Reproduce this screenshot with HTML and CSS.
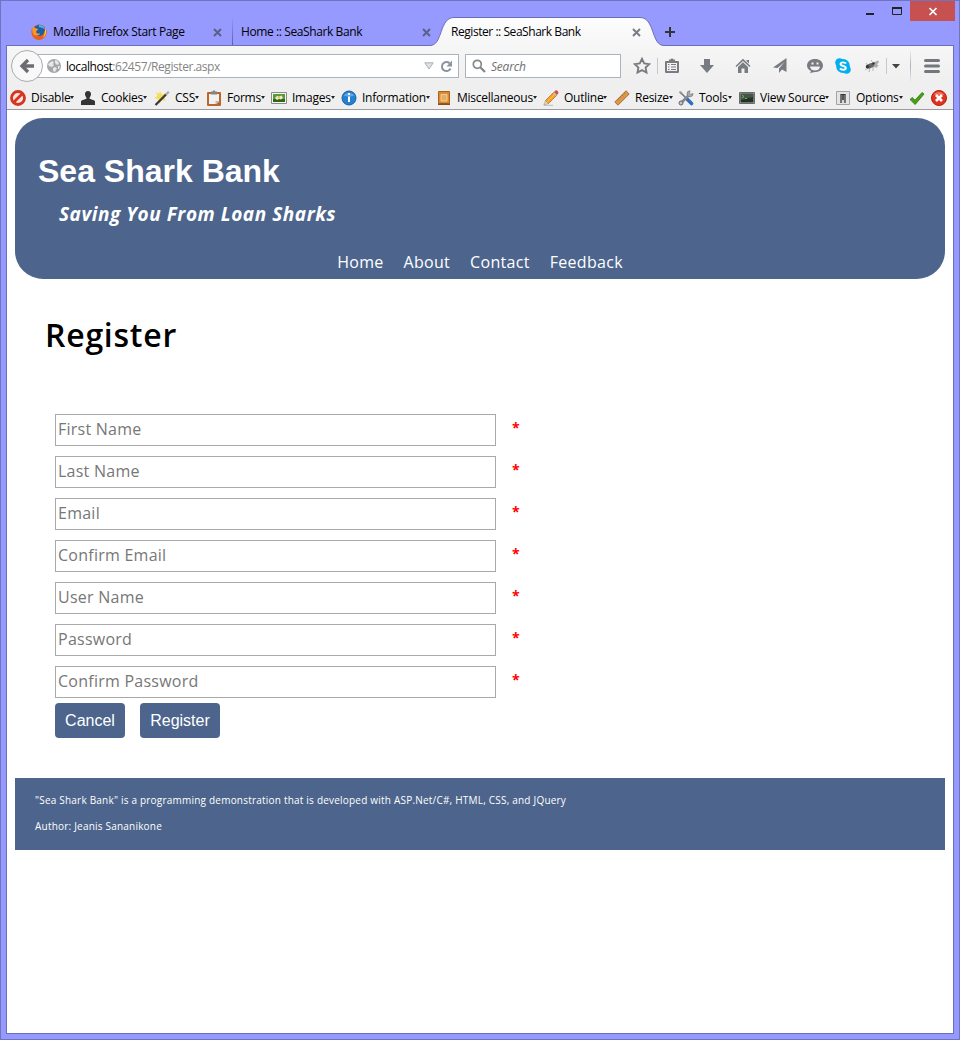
FILE: index.html
```html
<!DOCTYPE html>
<html lang="en">
<head>
<meta charset="utf-8">
<title>Register :: SeaShark Bank</title>
<link rel="stylesheet" href="styles.css">
</head>
<body>
<div class="window">
  <div class="titlebar">
    <svg class="win-btn" width="27" height="20" viewBox="0 0 27 20"><path d="M10 12h8v2h-8z" fill="#222"/></svg>
    <svg class="win-btn" width="27" height="20" viewBox="0 0 27 20"><path d="M9.500 7v6.500h9V7" fill="none" stroke="#222"/><path d="M9 6h10v2H9z" fill="#222"/></svg>
    <svg class="win-close" width="45" height="20" viewBox="0 0 45 20"><path d="M19.500 7l7 7M26.500 7l-7 7" stroke="#fff" stroke-width="1.700"/></svg>
  </div>
  <div class="tabs">
    <div class="tab tab-first">
      <svg width="16" height="16" viewBox="0 0 16 16"><circle cx="8" cy="8" r="7.500" fill="#e8641b"/><circle cx="8.500" cy="6.500" r="5.800" fill="#1c5fa8"/><path d="M8 1a6 6 0 0 1 6 5c-2-3-5-2-6-3z" fill="#4fb4e8"/><path d="M1 4c0 7 3 8 7 8 3 0 5-2 5-4l2-3c2 6-2 11-7 11S-1 11 1 4z" fill="#e8601a"/><path d="M2 3c1 1 3 1 5 2 0 1-2 2-2 3 1 2 3 2 4 1 0 3-4 3-6 2C1 9 1 5 2 3z" fill="#f49a2d"/><path d="M14 4c2 3 1 8-2 10 2-4 2-6 2-10z" fill="#fdd53a"/></svg>
      <span class="tab-label">Mozilla Firefox Start Page</span>
      <svg class="x" width="9" height="9" viewBox="0 0 9 9"><path d="M1 1l7 7M8 1l-7 7"/></svg>
    </div>
    <div class="tab-sep"></div>
    <div class="tab tab-second">
      <span class="tab-label">Home :: SeaShark Bank</span>
      <svg class="x" width="9" height="9" viewBox="0 0 9 9"><path d="M1 1l7 7M8 1l-7 7"/></svg>
    </div>
    <div class="tab tab-active">
      <svg class="tab-shape" width="234" height="29" viewBox="0 0 234 29">
        <defs><linearGradient id="tg" x1="0" y1="0" x2="0" y2="1"><stop offset="0" stop-color="#fdfdfe"/><stop offset="1" stop-color="#f6f6f7"/></linearGradient></defs>
        <path d="M0 28.500C13 28.500 9 .5 24 .5H210C225 .5 221 28.500 234 28.500V29H0z" fill="url(#tg)"/>
        <path d="M0 28.500C13 28.500 9 .5 24 .5H210C225 .5 221 28.500 234 28.500" fill="none" stroke="#6b6eb8"/>
      </svg>
      <span class="tab-label">Register :: SeaShark Bank</span>
      <svg class="x" width="9" height="9" viewBox="0 0 9 9"><path d="M1 1l7 7M8 1l-7 7"/></svg>
    </div>
    <svg class="plus" width="12" height="12" viewBox="0 0 12 12"><path d="M6 1v10M1 6h10" stroke="#333" stroke-width="2"/></svg>
  </div>

  <div class="content">
    <div class="chrome">
      <div class="navbar">
        <svg class="back" width="34" height="34" viewBox="0 0 34 34"><circle cx="17" cy="17" r="15.500" fill="#f8f8f9" stroke="#a9abae"/><path d="M18 11l-6 6 6 6M12.500 17H24" fill="none" stroke="#6b6d71" stroke-width="3.300"/></svg>
        <div class="url">
          <svg width="14" height="14" viewBox="0 0 14 14"><circle cx="7" cy="7" r="7" fill="#a5a6a8"/><path d="M1 5l4-3 2 1-1 2 1 1-2 2-3-1zM8 1l3 1 1 3-2 1-2-2zM6 9l2-1 2 1-2 4-2-1zM11 7l2 0-1 3-1 0z" fill="#e6e7e9"/></svg>
          <span class="url-text"><b>localhost</b>:62457/Register.aspx</span>
          <svg class="url-drop" width="10" height="8" viewBox="0 0 10 8"><path d="M.8 .8h8.400L5 7z" fill="#dfe2e6" stroke="#a9afb6"/></svg>
          <svg width="13" height="13" viewBox="0 0 13 13"><path d="M9.500 3.300A4.500 4.500 0 1 0 10.500 8.500" fill="none" stroke="#8895a1" stroke-width="2"/><path d="M12 .5v6H6.500z" fill="#8895a1"/></svg>
        </div>
        <div class="search">
          <svg width="14" height="14" viewBox="0 0 14 14"><circle cx="5.300" cy="5.300" r="4" fill="none" stroke="#85878a" stroke-width="1.700"/><path d="M8.500 8.500l4.500 4.500" stroke="#85878a" stroke-width="2.300"/></svg>
          <span>Search</span>
        </div>
        <div class="tools">
          <svg width="18" height="18" viewBox="0 0 18 18"><path d="M9 1.800l2.200 4.600 5 .7-3.600 3.500.9 5L9 13.200l-4.500 2.400.9-5L1.800 7.100l5-.7z" fill="none" stroke="#787b80" stroke-width="1.900"/></svg>
          <i class="vsep"></i>
          <svg width="16" height="16" viewBox="0 0 16 16"><path d="M2 4h12v10H2z" fill="none" stroke="#787b80" stroke-width="2" stroke-linejoin="round"/><path d="M5 4V1.500h1.500L7.500.5h1l1 1H11V4z" fill="#787b80"/><path d="M4 6.500h1.500M7 6.500h5M4 9h1.500M7 9h5M4 11.500h1.500M7 11.500h5" stroke="#787b80"/></svg>
          <svg width="16" height="16" viewBox="0 0 16 16"><path d="M5 1h6v6h4l-7 8-7-8h4z" fill="#787b80"/></svg>
          <svg width="16" height="16" viewBox="0 0 16 16"><path d="M8 .8L15.500 8l-1 1L8 3 1.500 9l-1-1zM11.500 2H14v3.500L11.500 3z" fill="#787b80"/><path d="M3 9l5-4.700L13 9v6H9.500v-4.500h-3V15H3z" fill="#787b80"/></svg>
          <svg width="16" height="16" viewBox="0 0 16 16"><path d="M14.500 0v14L10 11.500 7 15v-4.500L12.500 4 5.500 10 1 9.500z" fill="#787b80"/></svg>
          <svg width="16" height="16" viewBox="0 0 16 16"><path d="M8 1c4.500 0 8 2.700 8 6.500S12.500 14 8 14l-5 1 1-2C1.500 12 0 10 0 7.500 0 3.700 3.500 1 8 1z" fill="#787b80"/><path d="M4.500 4.500h2v2h-2zM9.500 4.500h2v2h-2zM3 8.500h10c-.5 3-2.500 4-5 4s-4.500-1-5-4z" fill="#f2f2f3"/></svg>
          <svg width="16" height="16" viewBox="0 0 16 16"><circle cx="8" cy="8" r="6.900" fill="#00aff0"/><circle cx="4.500" cy="4.500" r="4.300" fill="#00aff0"/><circle cx="11.500" cy="11.500" r="4.300" fill="#00aff0"/><path d="M11 5.600C10 4 5.600 3.700 5.500 6c0 2.500 5.300 1.500 5.300 4 0 2.300-4.600 2.200-5.800.4" fill="none" stroke="#fff" stroke-width="1.900"/></svg>
          <svg width="16" height="16" viewBox="0 0 16 16"><path d="M2 5l2 3M1 12l3-2M5 14l1-4M9 13V9M13 10l-3-2M7 2l2 3" stroke="#a5a6a8" stroke-width=".8"/><path d="M6 6l8-3.500 1 1.500-2 2.500 2 1.500-3 1-5 .5z" fill="#a9abad"/><ellipse cx="6" cy="7.800" rx="4" ry="2.300" fill="#666" transform="rotate(-20 6 7.800)"/><circle cx="3.500" cy="8.800" r="1.800" fill="#3a3a3a"/><circle cx="9.500" cy="5.500" r="1.200" fill="#333"/></svg>
          <i class="vsep"></i>
          <svg width="8" height="5" viewBox="0 0 8 5"><path d="M0 0h8L4 4.500z" fill="#444"/></svg>
          <i class="vsep tall"></i>
          <svg width="16" height="14" viewBox="0 0 16 14"><path d="M1.500 1.500h13M1.500 7h13M1.500 12.500h13" stroke="#74777c" stroke-width="3" stroke-linecap="round"/></svg>
        </div>
      </div>

      <div class="devbar">
        <div class="dev"><svg width="16" height="16" viewBox="0 0 16 16"><circle cx="8" cy="8" r="6.500" fill="#f3e3df" stroke="#d9321f" stroke-width="2.800"/><path d="M3.500 12.500l9-9" stroke="#d9321f" stroke-width="2.800"/></svg><span>Disable</span><em></em></div>
        <div class="dev"><svg width="16" height="16" viewBox="0 0 16 16"><path d="M8 1c2 0 3.200 1.300 3 3.500C10.800 6.500 9.500 7 9.500 8.500c0 1 5 1 5.500 3V15H1v-3.500c.5-2 5.500-2 5.500-3C6.500 7 5.200 6.500 5 4.500 4.800 2.300 6 1 8 1z" fill="#333436"/></svg><span>Cookies</span><em></em></div>
        <div class="dev"><svg width="16" height="16" viewBox="0 0 16 16"><path d="M6 1l1.500 3.500L12 3l-2 4 2 4-4-1-3 4-.5-5L0 8l3.500-2L2 2l3 2z" fill="#f9dc55"/><path d="M1.500 15L12 4.500" stroke="#3a3a3a" stroke-width="2.300"/><path d="M12 4.500L14.800 1.700" stroke="#aaa" stroke-width="2.300"/></svg><span>CSS</span><em></em></div>
        <div class="dev"><svg width="16" height="16" viewBox="0 0 16 16"><rect x="1" y="2" width="14" height="14" rx="1" fill="#b9672d"/><path d="M3 4h10v7.500L10 14H3z" fill="#f1f1f1"/><path d="M9.500 14v-3H13z" fill="#b7b7b7"/><path d="M5 1.500h1.500L8 0l1.500 1.500H11v3H5z" fill="#858585"/></svg><span>Forms</span><em></em></div>
        <div class="dev"><svg width="16" height="16" viewBox="0 0 16 16"><path d="M.5 2.500h15v11H.5z" fill="#f6f6f6" stroke="#8b8b8b"/><path d="M2 4h12v8H2z" fill="#5c9a35"/><path d="M2 9h12v3H2z" fill="#2f6717"/><path d="M4 8l2-2 2 .5L10.500 5.500 12 8l-2 1.500-2-.5-2 1z" fill="#e9eed8"/><circle cx="8" cy="7.500" r="1.200" fill="#e6c34a"/></svg><span>Images</span><em></em></div>
        <div class="dev"><svg width="16" height="16" viewBox="0 0 16 16"><circle cx="8" cy="8" r="7" fill="#2580d0" stroke="#1762a8"/><path d="M3 5.500C4 2 12 2 13 5.500 11 7 5 7 3 5.500z" fill="#5ea9e5"/><path d="M7 3h2v2H7zM7 6.500h2V12H7z" fill="#fff"/></svg><span>Information</span><em></em></div>
        <div class="dev"><svg width="16" height="16" viewBox="0 0 16 16"><path d="M2.500 1.500h11v12h-11z" fill="#d98b35" stroke="#a9621c"/><path d="M2 13.500h12v1.500H2z" fill="#8a4e14"/><path d="M5 4.500h6v6.500H5z" fill="#e8ac5e" stroke="#f5cd8f"/></svg><span>Miscellaneous</span><em></em></div>
        <div class="dev"><svg width="16" height="16" viewBox="0 0 16 16"><path d="M1 15.300h9" stroke="#bbb"/><path d="M2.500 10.500L11 2l3 3-8.500 8.500z" fill="#f5a02a" stroke="#b9660f" stroke-width=".7"/><path d="M4 12L12.500 3.500" stroke="#fdc45a"/><path d="M2.500 10.500l3 3L.8 15z" fill="#eed6ae" stroke="#777" stroke-width=".4"/><path d="M11 2l1.500-1.500c1-.8 3.600 1.500 2.700 3L14 5z" fill="#d8474d"/><path d="M10.500 2.500l3 3" stroke="#bbb" stroke-width="1.400"/></svg><span>Outline</span><em></em></div>
        <div class="dev"><svg width="16" height="16" viewBox="0 0 16 16"><path d="M.8 12L12 .8 15.200 4 4 15.200z" fill="#d9984c" stroke="#a9672a" stroke-width=".9"/><path d="M4 9l1.200 1.200M6 7l1 1M8 5l1.200 1.200M10 3l1 1" stroke="#a9672a" stroke-width=".7"/></svg><span>Resize</span><em></em></div>
        <div class="dev"><svg width="16" height="16" viewBox="0 0 16 16"><path d="M2 2l6.500 6.500" stroke="#777" stroke-width="1.600"/><path d="M9 9l4.500 4.500" stroke="#2e6fbd" stroke-width="3.600" stroke-linecap="round"/><path d="M2 1l2.500 1.500-2 2L1 2z" fill="#999"/><path d="M2.500 13.500L11.500 4.500" stroke="#85888b" stroke-width="2.500"/><path d="M15 3.500A3 3 0 1 1 12 .8L11.500 3.500l1.200.8z" fill="#aaadaf" stroke="#6a6c6e" stroke-width=".6"/><circle cx="3" cy="13" r="2" fill="#c3c5c7" stroke="#666"/></svg><span>Tools</span><em></em></div>
        <div class="dev"><svg width="16" height="16" viewBox="0 0 16 16"><path d="M.5 2.500h15v11H.5z" fill="#b9bbb8" stroke="#6a6c69"/><path d="M1.500 3.500h13v9h-13z" fill="#243126"/><path d="M2 4h12v3L2 10z" fill="#46554a"/><path d="M3 5l2 1.500L3 8M6 8.500h2" fill="none" stroke="#5cdc3c" stroke-width=".8"/></svg><span>View Source</span><em></em></div>
        <div class="dev"><svg width="16" height="16" viewBox="0 0 16 16"><path d="M1.500 1.500h13v13h-13z" fill="#e4e4e4" stroke="#a3a3a3"/><path d="M5 4h6v9H5z" fill="#d4d4d4"/><path d="M6 13V4.500h4V13" fill="none" stroke="#333" stroke-width="1.200"/><path d="M7 5h2v5H7z" fill="#555"/></svg><span>Options</span><em></em></div>
        <div class="dev"><svg width="16" height="16" viewBox="0 0 16 16"><path d="M1 9.500l2.300-2L6 10.200 13 2.500l2 1.600L6.200 14.500z" fill="#4aa013" stroke="#2f760a" stroke-width=".8"/></svg></div>
        <div class="dev"><svg width="16" height="16" viewBox="0 0 16 16"><circle cx="8" cy="8" r="7.500" fill="#e0331f" stroke="#b81f10"/><path d="M3 5c1-4 9-4 10 0z" fill="#f0705c"/><path d="M5 5l6 6M11 5l-6 6" stroke="#fff" stroke-width="2.700"/></svg></div>
      </div>
    </div>

    <div class="page">
      <header class="banner">
        <h1>Sea Shark Bank</h1>
        <p class="tagline">Saving You From Loan Sharks</p>
        <nav><a>Home</a><a>About</a><a>Contact</a><a>Feedback</a></nav>
      </header>
      <h2>Register</h2>
      <form class="form">
        <div class="field"><input type="text" placeholder="First Name"><span>*</span></div>
        <div class="field"><input type="text" placeholder="Last Name"><span>*</span></div>
        <div class="field"><input type="text" placeholder="Email"><span>*</span></div>
        <div class="field"><input type="text" placeholder="Confirm Email"><span>*</span></div>
        <div class="field"><input type="text" placeholder="User Name"><span>*</span></div>
        <div class="field"><input type="password" placeholder="Password"><span>*</span></div>
        <div class="field"><input type="password" placeholder="Confirm Password"><span>*</span></div>
        <div class="actions"><button type="button" class="cancel">Cancel</button><button type="button" class="register">Register</button></div>
      </form>
      <footer>
        <p>"Sea Shark Bank" is a programming demonstration that is developed with ASP.Net/C#, HTML, CSS, and JQuery</p>
        <p>Author: Jeanis Sananikone</p>
      </footer>
    </div>
  </div>
</div>
</body>
</html>
```
FILE: styles.css
```css
* { box-sizing: border-box; }
body { margin: 0; font-family: "Open Sans", "Noto Sans", sans-serif; }
svg { display: block; flex: none; }
h1, h2, p { margin: 0; }

.window {
  width: 960px; height: 1040px;
  display: flex; flex-direction: column;
  padding: 0 5px 5px;
  background: #9699fd;
  border: 1px solid #7073bd;
}
.titlebar { height: 16px; display: flex; justify-content: flex-end; flex: none; margin-right: -1px; }
.titlebar .win-close { background: #c75050; }

.tabs { height: 28px; flex: none; display: flex; padding-left: 1px; font-size: 12px; letter-spacing: -0.36px; color: #000; }
.tab { position: relative; display: flex; align-items: center; padding-top: 2px; white-space: nowrap; }
.tab-label { flex: 1; position: relative; line-height: 16px; }
.tab .x { position: relative; fill: none; stroke: #5c6089; stroke-width: 2; }
.tab-first { width: 225px; padding-left: 24px; padding-right: 10px; gap: 6px; }
.tab-sep { width: 1px; background: linear-gradient(transparent, #5c5f9c); }
.tab-second { width: 204px; padding-left: 8px; padding-right: 6px; letter-spacing: -0.4px; }
.tab-active { width: 220px; padding-left: 14px; padding-right: 16px; z-index: 1; letter-spacing: -0.45px; }
.tab-active .x { stroke: #777d84; }
.tab-shape { position: absolute; left: -7px; top: 0; }
.plus { margin: 9px 0 0 7px; }

.content { flex: 1; background: #fff; border: 1px solid #6b6eb8; }
.chrome { height: 64px; background: linear-gradient(#f6f6f7, #efefef 60%); border-bottom: 1px solid #9b9b9b; }
.navbar { height: 40px; display: flex; align-items: center; padding-left: 3px; }
.back { z-index: 1; position: relative; }
.url, .search { height: 24px; background: #fff; border: 1px solid #aab4bf; display: flex; align-items: center; font-size: 12px; }
.url { width: 429px; margin-left: -14px; padding: 0 5px 0 16px; }
.url-text { flex: 1; padding-left: 5px; letter-spacing: -0.44px; color: #858585; }
.url-text b { font-weight: 400; color: #000; }
.url-drop { margin-right: 6px; }
.search { width: 156px; margin-left: 6px; padding-left: 6px; gap: 5px; font-style: italic; color: #707070; letter-spacing: -0.2px; }
.tools { flex: 1; display: grid; align-items: center; justify-items: center; margin-left: 12px;
  grid-template-columns: 18px 12px 18px 52px 20px 54px 16px 40px 18px 10px 10px 18px 26px; }
.vsep { width: 1px; height: 16px; background: #c6c8ca; }
.vsep.tall { height: 34px; background: linear-gradient(transparent, #a9b2ba, transparent); }

.devbar { display: grid; height: 23px; align-items: center; padding-left: 3px; font-size: 12px; letter-spacing: -0.25px; color: #000;
  grid-template-columns: 70px 74px 52px 65px 70px 95px 107px 71px 64px 61px 96px 74px 22px 16px; }
.dev { display: flex; align-items: center; white-space: nowrap; }
.dev span { margin-left: 5px; line-height: 18px; }
.dev em { border: 2.5px solid transparent; border-top: 3px solid #222; border-bottom: 0; }

.page { padding: 8px; }
.banner { height: 161px; border-radius: 28px; background: #4d658d; color: #fff; padding: 34px 0 0 23px; }
.banner h1 { font: bold 32px/38px "Liberation Sans", sans-serif; }
.tagline { padding: 12px 0 0 21px; font-size: 19px; line-height: 24px; font-weight: 700; font-style: italic; letter-spacing: 0.55px; }
nav { display: flex; gap: 20px; justify-content: center; margin: 24px 23px 0 0; font-size: 16px; line-height: 24px; letter-spacing: 0.3px; }
.page h2 { margin: 32px 0 0 30px; font-size: 32px; line-height: 48px; font-weight: 600; letter-spacing: 0.75px; }
.form { padding: 55px 0 0 40px; }
.field { display: flex; height: 32px; margin-bottom: 10px; }
.field input { width: 441px; height: 32px; padding: 0 2px 2px; border: 1px solid #a9a9ad; background: #fff; font: 16px "Open Sans", "Noto Sans", sans-serif; letter-spacing: 0.25px; }
.field input::placeholder { color: #777; opacity: 1; }
.field span { margin-left: 16px; color: #f00; font-size: 14px; font-weight: 700; line-height: 27px; }
.actions { display: flex; gap: 15px; margin-top: -5px; }
.actions button { height: 35px; padding: 0; border: 0; border-radius: 4px; background: #4d658d; color: #fff; font: 16px "Liberation Sans", sans-serif; }
.cancel { width: 70px; }
.register { width: 80px; }
footer { height: 72px; margin-top: 40px; padding: 14px 20px; background: #4d658d; color: #fff; font-size: 10px; line-height: 16px; letter-spacing: 0.21px; }
footer p + p { margin-top: 10px; }
```
